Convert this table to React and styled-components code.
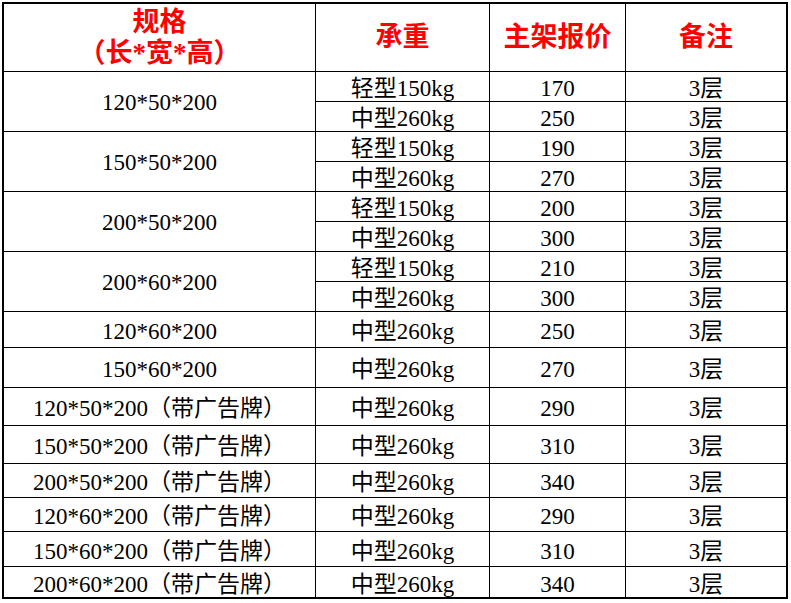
import styled, { createGlobalStyle } from "styled-components";

const GlobalStyle = createGlobalStyle`
  *, *::before, *::after { box-sizing: border-box; }
  html, body { margin: 0; padding: 0; background: #fff; }
  body { font-family: "Liberation Serif", "Noto Sans CJK SC", serif; }
`;

const groups = [
  { size: "120*50*200", items: [["轻型150kg", "170"], ["中型260kg", "250"]] },
  { size: "150*50*200", items: [["轻型150kg", "190"], ["中型260kg", "270"]] },
  { size: "200*50*200", items: [["轻型150kg", "200"], ["中型260kg", "300"]] },
  { size: "200*60*200", items: [["轻型150kg", "210"], ["中型260kg", "300"]] },
];

const singles = [
  { size: "120*60*200", price: "250", h: 36 },
  { size: "150*60*200", price: "270", h: 40 },
  { size: "120*50*200（带广告牌）", price: "290", h: 38 },
  { size: "150*50*200（带广告牌）", price: "310", h: 38 },
  { size: "200*50*200（带广告牌）", price: "340", h: 34 },
  { size: "120*60*200（带广告牌）", price: "290", h: 34 },
  { size: "150*60*200（带广告牌）", price: "310", h: 35 },
  { size: "200*60*200（带广告牌）", price: "340", h: 31 },
];

const rowHeights = ["68px", "repeat(8, 30px)", ...singles.map((s) => `${s.h}px`)].join(" ");

const Page = styled.div`
  padding: 2px 0 0 2px;
`;

const Sheet = styled.div`
  display: grid;
  grid-template-columns: 312px 174px 136px 161px;
  grid-template-rows: ${(p) => p.$rows};
  width: max-content;
  border-style: solid;
  border-color: #000;
  border-width: 2px 1px 1px 2px;
`;

const Cell = styled.div`
  display: flex;
  align-items: center;
  justify-content: center;
  grid-row: span ${(p) => p.$span || 1};
  padding-top: ${(p) => (p.$span ? 2 : 4)}px;
  border-right: 1px solid #000;
  border-bottom: 1px solid #000;
  color: #000;
  font-size: 23px;
  line-height: 1;
  white-space: nowrap;
`;

const HeadCell = styled(Cell)`
  flex-direction: column;
  padding-top: 0;
  color: #ff0000;
  font-weight: bold;
  font-size: 27px;
  line-height: 31px;
`;

export default function App() {
  return (
    <>
      <GlobalStyle />
      <Page>
        <Sheet $rows={rowHeights}>
          <HeadCell>
            <span>规格</span>
            <span>（长*宽*高）</span>
          </HeadCell>
          <HeadCell>承重</HeadCell>
          <HeadCell>主架报价</HeadCell>
          <HeadCell>备注</HeadCell>

          {groups.map((g) => [
            <Cell key={g.size} $span={2}>{g.size}</Cell>,
            ...g.items.flatMap(([load, price], i) => [
              <Cell key={`${g.size}-l${i}`}>{load}</Cell>,
              <Cell key={`${g.size}-p${i}`}>{price}</Cell>,
              <Cell key={`${g.size}-n${i}`}>3层</Cell>,
            ]),
          ])}

          {singles.map((s) => [
            <Cell key={s.size}>{s.size}</Cell>,
            <Cell key={`${s.size}-l`}>中型260kg</Cell>,
            <Cell key={`${s.size}-p`}>{s.price}</Cell>,
            <Cell key={`${s.size}-n`}>3层</Cell>,
          ])}
        </Sheet>
      </Page>
    </>
  );
}
